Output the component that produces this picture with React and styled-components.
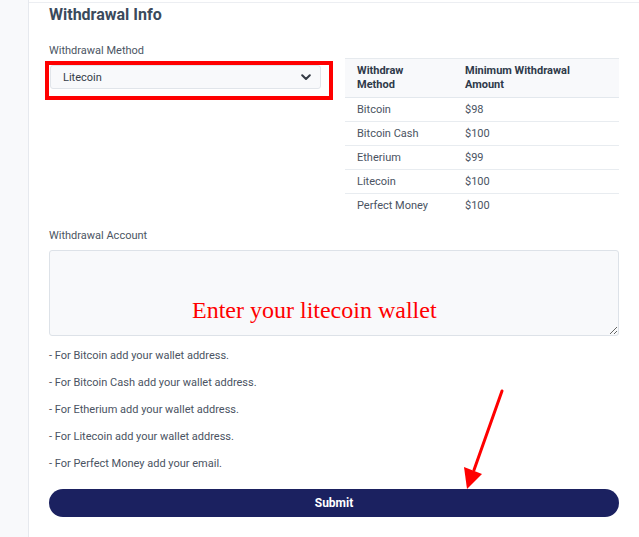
import React from "react";
import styled, { createGlobalStyle } from "styled-components";

const GlobalStyle = createGlobalStyle`
  html, body {
    margin: 0;
    padding: 0;
    background: #ffffff;
  }
  body {
    font-family: Roboto, "Liberation Sans", Arial, sans-serif;
    -webkit-font-smoothing: antialiased;
  }
`;

const Page = styled.div`
  position: relative;
  display: flex;
  min-height: 100vh;
  width: 639px;
  overflow: hidden;
`;

const Sidebar = styled.aside`
  flex: 0 0 28px;
  background: #f8f9fb;
  border-right: 1px solid #e6e9ee;
`;

const Main = styled.main`
  flex: 1;
  padding: 0 20px;
  margin-top: 2px;
  border-top: 1px solid #eceef2;
`;

const Title = styled.h2`
  margin: 2px 0 0;
  font-size: 16px;
  line-height: 20px;
  font-weight: 700;
  color: #3b4a5c;
`;

const Label = styled.label`
  display: block;
  font-size: 11px;
  line-height: 16px;
  color: #4b5563;
  margin-top: ${p => p.$top || 0}px;
`;

const TopRow = styled.div`
  display: grid;
  grid-template-columns: 272px 1fr;
  column-gap: 24px;
  margin-top: 18px;
`;

const HighlightFrame = styled.div`
  display: flex;
  width: max-content;
  margin: 2px 0 0 -4px;
  padding: 0 8px 7px 1px;
  border: 4px solid #ff0000;
`;

const SelectBox = styled.div`
  box-sizing: border-box;
  width: 271px;
  height: 24px;
  display: flex;
  align-items: center;
  justify-content: space-between;
  padding: 0 9px 0 12px;
  background: #f8f9fb;
  border: 1px solid #e1e5ea;
  border-radius: 3px;
  font-size: 11px;
  color: #353d48;
`;

const Table = styled.table`
  width: 100%;
  margin-top: 15px;
  border-collapse: collapse;
  table-layout: fixed;
  font-size: 11px;
`;

const HeadCell = styled.th`
  text-align: left;
  font-weight: 700;
  color: #2f3a4a;
  line-height: 14px;
  padding: 5px 12px;
  background: #f8f9fb;
  border-top: 1px solid #e6eaee;
  border-bottom: 1px solid #e3e8ed;
  vertical-align: top;
`;

const Cell = styled.td`
  color: #4a5362;
  line-height: 16px;
  padding: 4px 12px 3px;
  border-bottom: ${p => (p.$last ? "none" : "1px solid #e8ecf0")};
`;

const AccountWrap = styled.div`
  position: relative;
  margin-top: 6px;
`;

const AccountInput = styled.textarea`
  display: block;
  box-sizing: border-box;
  width: 100%;
  height: 86px;
  margin: 0;
  background: #f8f9fb;
  border: 1px solid #dde2e8;
  border-radius: 3px;
  resize: vertical;
  font-family: inherit;
`;

const Annotation = styled.span`
  position: absolute;
  left: 143px;
  top: 48px;
  font-family: "Liberation Serif", "Times New Roman", serif;
  font-size: 24px;
  line-height: 24px;
  color: #ff0000;
  pointer-events: none;
  white-space: nowrap;
`;

const Notes = styled.div`
  margin-top: 12px;
  display: flex;
  flex-direction: column;
  gap: 11px;
`;

const Note = styled.p`
  margin: 0;
  font-size: 11px;
  line-height: 16px;
  color: #4a5362;
`;

const SubmitButton = styled.button`
  display: block;
  width: 100%;
  height: 28px;
  margin-top: 17px;
  border: none;
  border-radius: 14px;
  background: #1b2160;
  color: #ffffff;
  font-family: inherit;
  font-size: 12px;
  font-weight: 700;
  cursor: pointer;
`;

const ArrowOverlay = styled.svg`
  position: absolute;
  left: 0;
  top: 0;
  pointer-events: none;
`;

const limits = [
  ["Bitcoin", "$98"],
  ["Bitcoin Cash", "$100"],
  ["Etherium", "$99"],
  ["Litecoin", "$100"],
  ["Perfect Money", "$100"]
];

const notes = [
  "- For Bitcoin add your wallet address.",
  "- For Bitcoin Cash add your wallet address.",
  "- For Etherium add your wallet address.",
  "- For Litecoin add your wallet address.",
  "- For Perfect Money add your email."
];

const Chevron = () => (
  <svg width="10" height="7" viewBox="0 0 10 7">
    <polyline
      points="1.2,1.2 5,5 8.8,1.2"
      fill="none"
      stroke="#343a44"
      strokeWidth="2"
      strokeLinecap="round"
      strokeLinejoin="round"
    />
  </svg>
);

const App = () => {
  return (
    <>
      <GlobalStyle />
      <Page>
        <Sidebar />
        <Main>
          <Title>Withdrawal Info</Title>
          <TopRow>
            <div>
              <Label>Withdrawal Method</Label>
              <HighlightFrame>
                <SelectBox>
                  <span>Litecoin</span>
                  <Chevron />
                </SelectBox>
              </HighlightFrame>
            </div>
            <div>
              <Table>
                <colgroup>
                  <col style={{ width: 108 }} />
                  <col />
                </colgroup>
                <thead>
                  <tr>
                    <HeadCell>Withdraw Method</HeadCell>
                    <HeadCell>Minimum Withdrawal Amount</HeadCell>
                  </tr>
                </thead>
                <tbody>
                  {limits.map(([method, amount], i) => (
                    <tr key={method}>
                      <Cell $last={i === limits.length - 1}>{method}</Cell>
                      <Cell $last={i === limits.length - 1}>{amount}</Cell>
                    </tr>
                  ))}
                </tbody>
              </Table>
            </div>
          </TopRow>

          <Label $top={11}>Withdrawal Account</Label>
          <AccountWrap>
            <AccountInput />
            <Annotation>Enter your litecoin wallet</Annotation>
          </AccountWrap>

          <Notes>
            {notes.map(n => (
              <Note key={n}>{n}</Note>
            ))}
          </Notes>

          <SubmitButton type="submit">Submit</SubmitButton>
        </Main>

        <ArrowOverlay width="639" height="537" viewBox="0 0 639 537">
          <line
            x1="502"
            y1="391"
            x2="474"
            y2="470"
            stroke="#ff0000"
            strokeWidth="3"
            strokeLinecap="round"
          />
          <polygon points="467,489 464,467 482,474" fill="#ff0000" />
        </ArrowOverlay>
      </Page>
    </>
  );
};

export default App;
